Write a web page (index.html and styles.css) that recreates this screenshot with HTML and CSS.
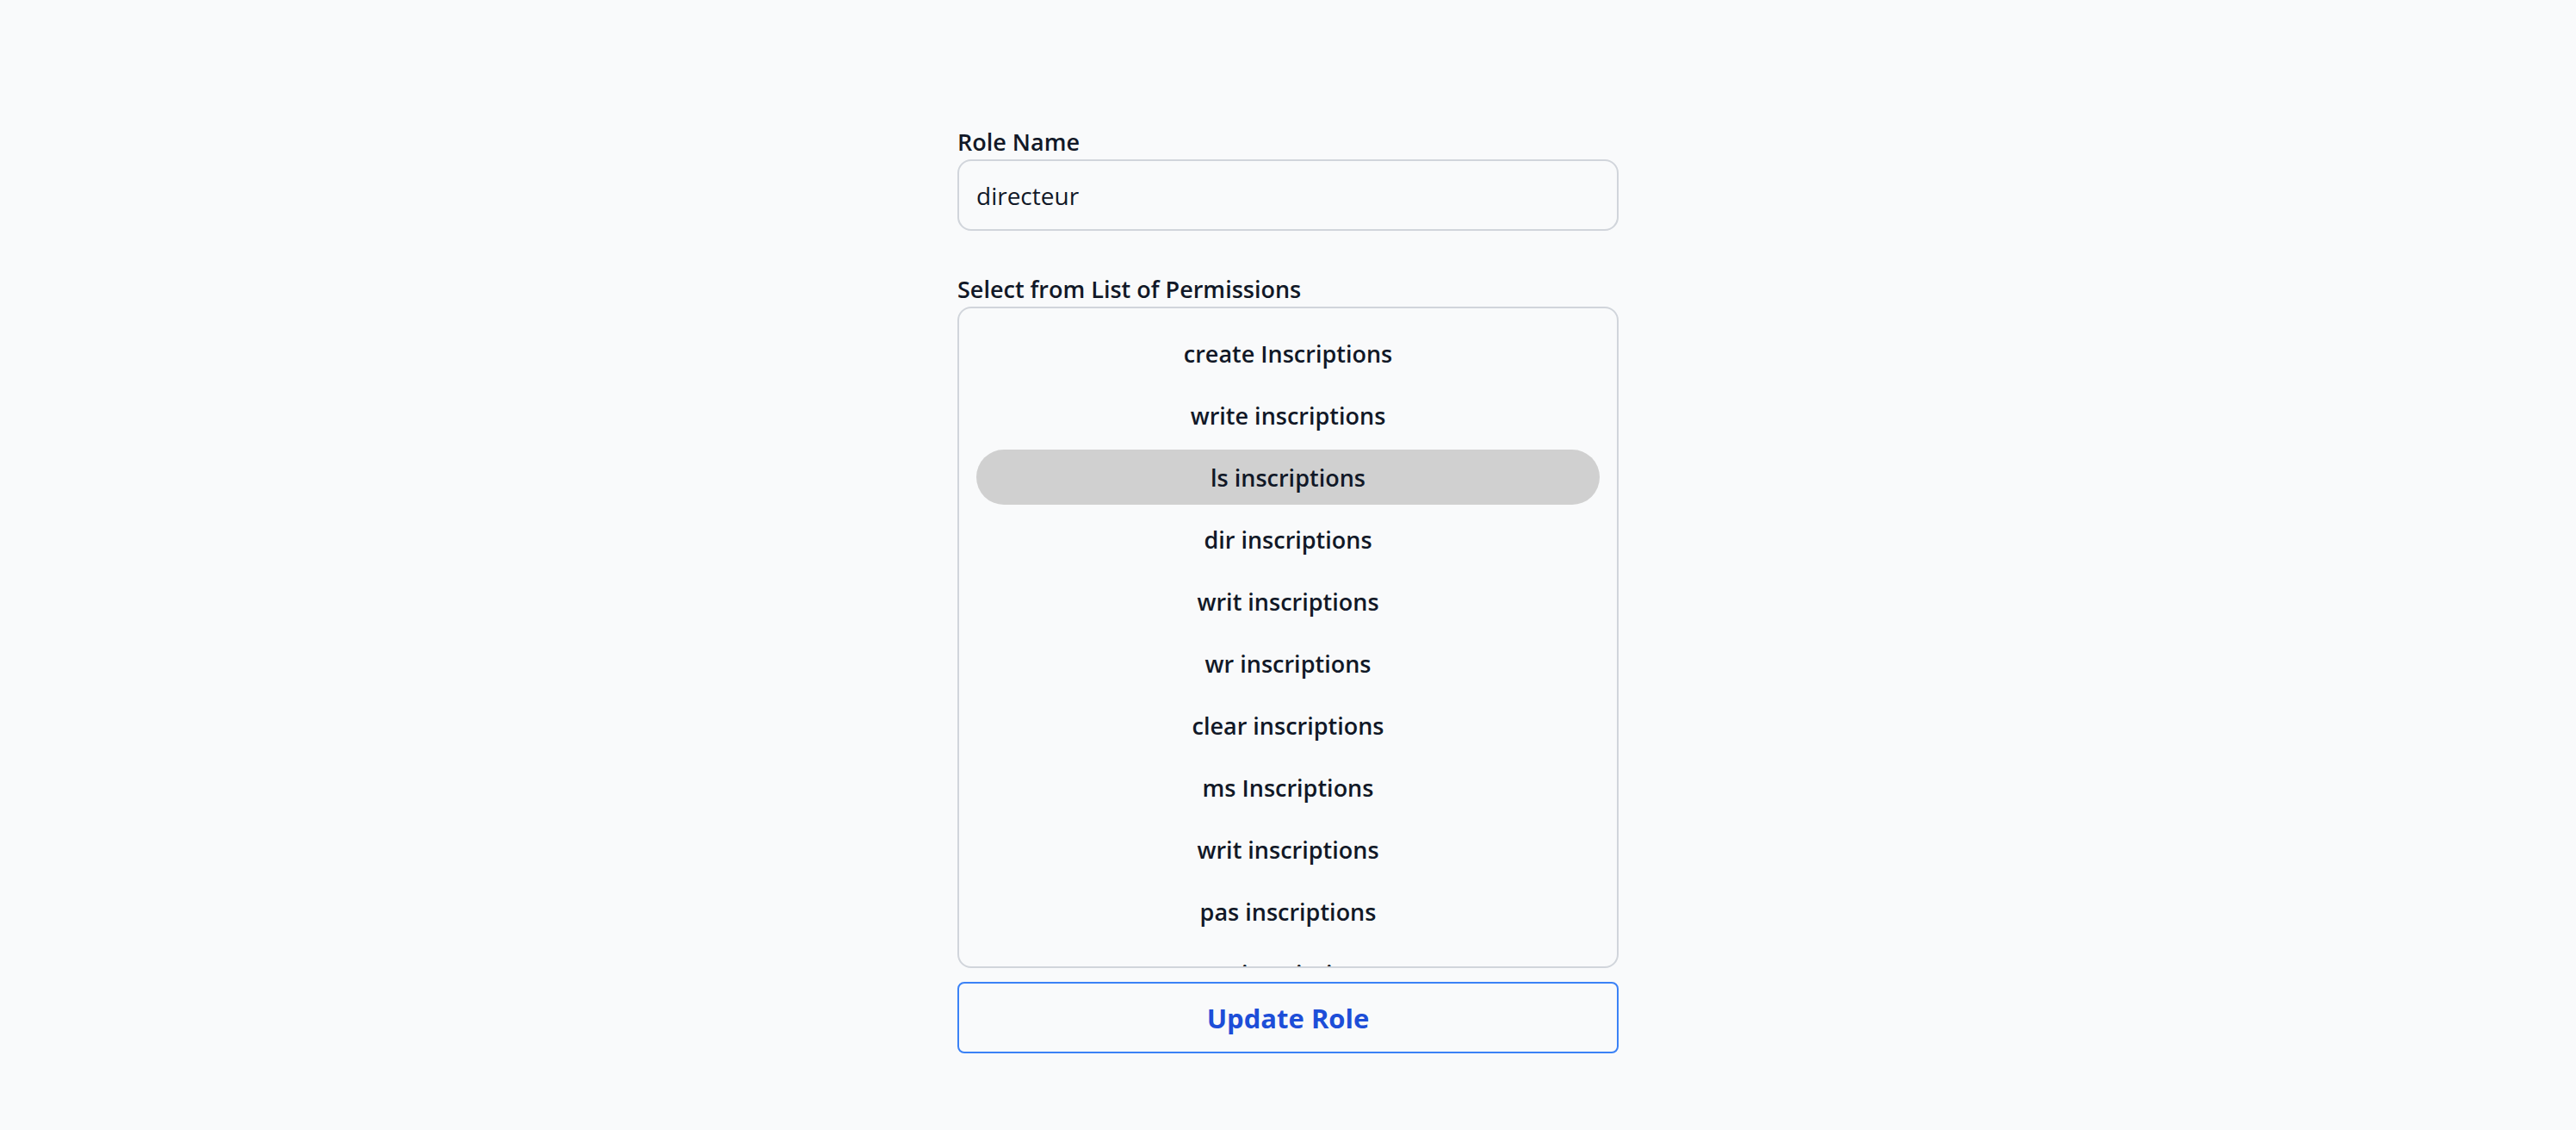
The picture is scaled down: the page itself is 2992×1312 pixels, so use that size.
FILE: index.html
```html
<!DOCTYPE html>
<html lang="en">
<head>
<meta charset="utf-8">
<title>Update Role</title>
<link rel="stylesheet" href="styles.css">
</head>
<body>
<main class="page">
  <form class="role-form">
    <label class="field-label" for="role-name">Role Name</label>
    <input class="text-input" id="role-name" type="text" value="directeur">

    <div class="field-label list-label">Select from List of Permissions</div>
    <ul class="perm-list">
      <li class="perm-item">create Inscriptions</li>
      <li class="perm-item">write inscriptions</li>
      <li class="perm-item is-selected">ls inscriptions</li>
      <li class="perm-item">dir inscriptions</li>
      <li class="perm-item">writ inscriptions</li>
      <li class="perm-item">wr inscriptions</li>
      <li class="perm-item">clear inscriptions</li>
      <li class="perm-item">ms Inscriptions</li>
      <li class="perm-item">writ inscriptions</li>
      <li class="perm-item">pas inscriptions</li>
      <li class="perm-item">rm inscriptions</li>
      <li class="perm-item">cat inscriptions</li>
    </ul>

    <button class="submit-btn" type="button">Update Role</button>
  </form>
</main>
</body>
</html>
```
FILE: styles.css
```css
* { box-sizing: border-box; }

html, body {
  margin: 0;
  padding: 0;
  background: #f9fafb;
}

body {
  font-family: "Open Sans", "Noto Sans", sans-serif;
  color: #111827;
}

.page {
  display: flex;
  justify-content: center;
  padding-top: 145px;
}

.role-form {
  width: 768px;
  display: flex;
  flex-direction: column;
}

.field-label {
  display: block;
  font-size: 27px;
  line-height: 40px;
  font-weight: 600;
  color: #111827;
}

.list-label {
  margin-top: 48px;
}

.text-input {
  height: 83px;
  width: 100%;
  border: 2px solid #d1d5db;
  border-radius: 16px;
  background: #f9fafb;
  padding: 0 20px;
  font-family: inherit;
  font-size: 28px;
  color: #111827;
  outline: none;
}

.perm-list {
  list-style: none;
  margin: 0;
  height: 768px;
  overflow: hidden;
  border: 2px solid #d1d5db;
  border-radius: 16px;
  padding: 20px;
  display: flex;
  flex-direction: column;
  gap: 8px;
}

.perm-item {
  flex: 0 0 64px;
  height: 64px;
  display: flex;
  align-items: center;
  justify-content: center;
  border-radius: 32px;
  font-size: 27px;
  font-weight: 600;
  color: #111827;
}

.perm-item.is-selected {
  background: #d0d0d0;
}

.submit-btn {
  margin-top: 16px;
  height: 83px;
  width: 100%;
  border: 2px solid #3b82f6;
  border-radius: 8px;
  background: #f9fafb;
  color: #1d4ed8;
  font-family: inherit;
  font-size: 31px;
  line-height: 40px;
  font-weight: 700;
  cursor: pointer;
}
```
